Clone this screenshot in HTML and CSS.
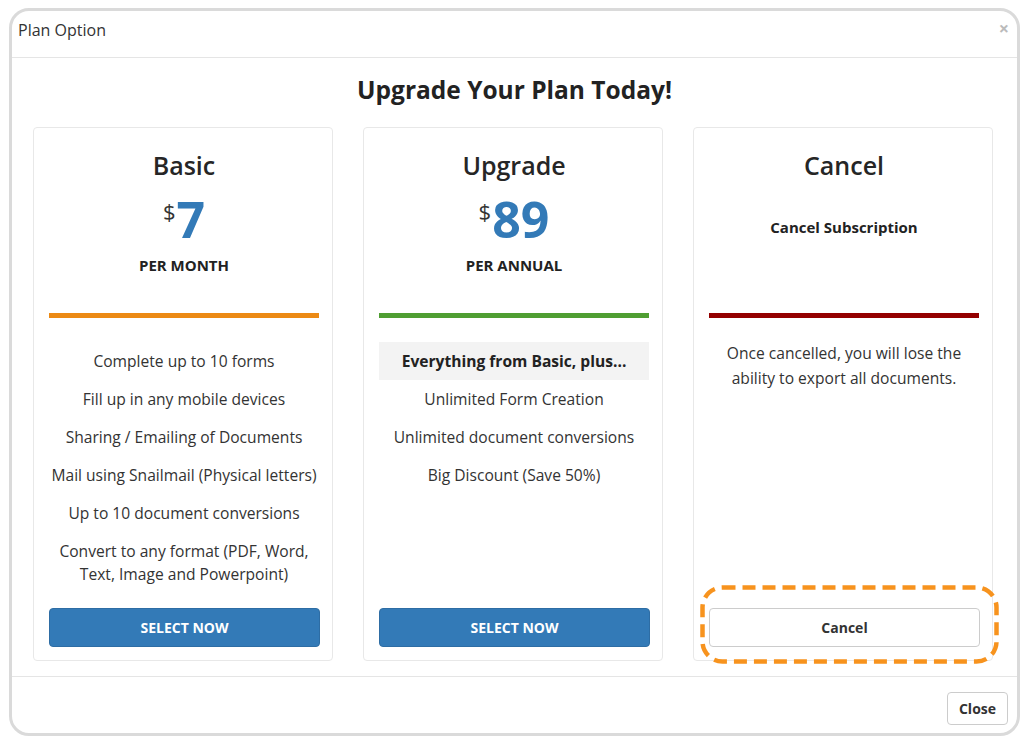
FILE: index.html
```html
<!DOCTYPE html>
<html>
<head>
<meta charset="utf-8">
<link rel="stylesheet" href="styles.css">
</head>
<body>
<div class="modal">
  <div class="modal-header">
    <span class="modal-title">Plan Option</span>
    <span class="close-x">×</span>
  </div>
  <div class="modal-body">
    <h2 class="page-title">Upgrade Your Plan Today!</h2>
    <div class="plans">
      <div class="card">
        <div class="plan-top">
          <h3 class="plan-name">Basic</h3>
          <div class="price"><span class="cur">$</span><span class="amt">7</span></div>
          <div class="period">PER MONTH</div>
        </div>
        <div class="bar bar-orange"></div>
        <ul class="features">
          <li>Complete up to 10 forms</li>
          <li>Fill up in any mobile devices</li>
          <li>Sharing / Emailing of Documents</li>
          <li>Mail using Snailmail (Physical letters)</li>
          <li>Up to 10 document conversions</li>
          <li>Convert to any format (PDF, Word, Text, Image and Powerpoint)</li>
        </ul>
        <button class="btn btn-primary">SELECT NOW</button>
      </div>
      <div class="card">
        <div class="plan-top">
          <h3 class="plan-name">Upgrade</h3>
          <div class="price"><span class="cur">$</span><span class="amt">89</span></div>
          <div class="period">PER ANNUAL</div>
        </div>
        <div class="bar bar-green"></div>
        <ul class="features">
          <li class="highlight">Everything from Basic, plus...</li>
          <li>Unlimited Form Creation</li>
          <li>Unlimited document conversions</li>
          <li>Big Discount (Save 50%)</li>
        </ul>
        <button class="btn btn-primary">SELECT NOW</button>
      </div>
      <div class="card">
        <div class="plan-top">
          <h3 class="plan-name">Cancel</h3>
          <div class="subtitle">Cancel Subscription</div>
        </div>
        <div class="bar bar-red"></div>
        <p class="cancel-text">Once cancelled, you will lose the ability to export all documents.</p>
        <div class="btn-wrap">
          <button class="btn btn-default">Cancel</button>
          <svg class="dash-ring" width="300" height="80" viewBox="0 0 300 80">
            <rect x="2.5" y="2.5" width="294" height="74" rx="20" ry="20" fill="none" stroke="#f7931e" stroke-width="4.5" stroke-dasharray="13 7"/>
          </svg>
        </div>
      </div>
    </div>
  </div>
  <div class="modal-footer">
    <button class="btn-close">Close</button>
  </div>
</div>
</body>
</html>
```

FILE: styles.css
```css
* { box-sizing: border-box; }
html, body { margin: 0; padding: 0; background: #fff; }
body {
  font-family: "Open Sans", "Liberation Sans", sans-serif;
  color: #333;
  padding: 8px 9px 0 9px;
}
.modal {
  width: 1011px;
  height: 728px;
  border: 3px solid #dadada;
  border-radius: 20px;
  background: #fff;
  display: flex;
  flex-direction: column;
  overflow: hidden;
}
.modal-header {
  flex-shrink: 0;
  height: 47px;
  border-bottom: 1px solid #e5e5e5;
  display: flex;
  align-items: center;
  justify-content: space-between;
  padding: 0 8px 8px 6px;
}
.modal-title { font-size: 16px; color: #333; }
.close-x { font-size: 18px; color: #bbb; font-weight: 700; line-height: 1; margin-top: -4px; }
.modal-body {
  flex: 1;
  padding: 15px 0 15px;
}
.page-title {
  margin: 0 0 21px;
  text-align: center;
  font-size: 24.5px;
  line-height: 33px;
  font-weight: 700;
  color: #222;
}
.plans {
  width: 960px;
  margin: 0 0 0 21px;
  display: flex;
  gap: 30px;
  align-items: stretch;
}
.card {
  width: 300px;
  border: 1px solid #e8e8e8;
  border-radius: 4px;
  padding: 19px 13px 13px 15px;
  display: flex;
  flex-direction: column;
}
.plan-top {
  height: 166px;
  text-align: center;
}
.plan-name {
  margin: 0;
  font-size: 25px;
  line-height: 36px;
  font-weight: 600;
  color: #262626;
}
.price {
  margin-top: 11px;
  display: flex;
  justify-content: center;
  align-items: flex-start;
  line-height: 50px;
}
.cur { font-size: 22px; line-height: 30px; margin-top: 2px; margin-right: 1px; color: #333; }
.amt { font-size: 50px; font-weight: 700; color: #337ab7; line-height: 50px; }
.period {
  margin-top: 11px;
  font-size: 15px;
  font-weight: 700;
  line-height: 20px;
  color: #222;
}
.subtitle {
  margin-top: 34px;
  font-size: 15px;
  font-weight: 700;
  line-height: 20px;
  color: #222;
}
.bar { height: 5px; width: 270px; }
.bar-orange { background: #ec8a14; }
.bar-green { background: #4f9e32; }
.bar-red { background: #940000; }
.features {
  list-style: none;
  margin: 24px 0 15px;
  padding: 0;
  text-align: center;
  width: 270px;
}
.features li {
  font-size: 15.6px;
  line-height: 23px;
  padding: 7.5px 0;
}
.features li.highlight {
  background: #f3f3f3;
  font-weight: 700;
  color: #222;
}
.cancel-text {
  margin: 23px 0 0;
  font-size: 15.6px;
  line-height: 25px;
  text-align: center;
  width: 270px;
}
.btn {
  margin-top: auto;
  flex-shrink: 0;
  width: 271px;
  height: 39px;
  border-radius: 4px;
  font-family: "Open Sans", "Liberation Sans", sans-serif;
  font-size: 14px;
  font-weight: 700;
  cursor: pointer;
}
.btn-primary {
  background: #337ab7;
  border: 1px solid #2e6da4;
  color: #fff;
}
.btn-wrap {
  margin-top: auto;
  position: relative;
  width: 271px;
}
.btn-default {
  background: #fff;
  border: 1px solid #ccc;
  color: #333;
  display: block;
  margin-top: -1px;
}
.dash-ring {
  position: absolute;
  left: -9px;
  top: -24px;
  pointer-events: none;
}
.modal-footer {
  flex-shrink: 0;
  border-top: 1px solid #e5e5e5;
  padding: 15px 9px 8px;
  display: flex;
  justify-content: flex-end;
}
.btn-close {
  width: 61px;
  height: 33px;
  background: #fff;
  border: 1px solid #ccc;
  border-radius: 4px;
  font-family: "Open Sans", "Liberation Sans", sans-serif;
  font-size: 14px;
  font-weight: 700;
  color: #333;
}
```
